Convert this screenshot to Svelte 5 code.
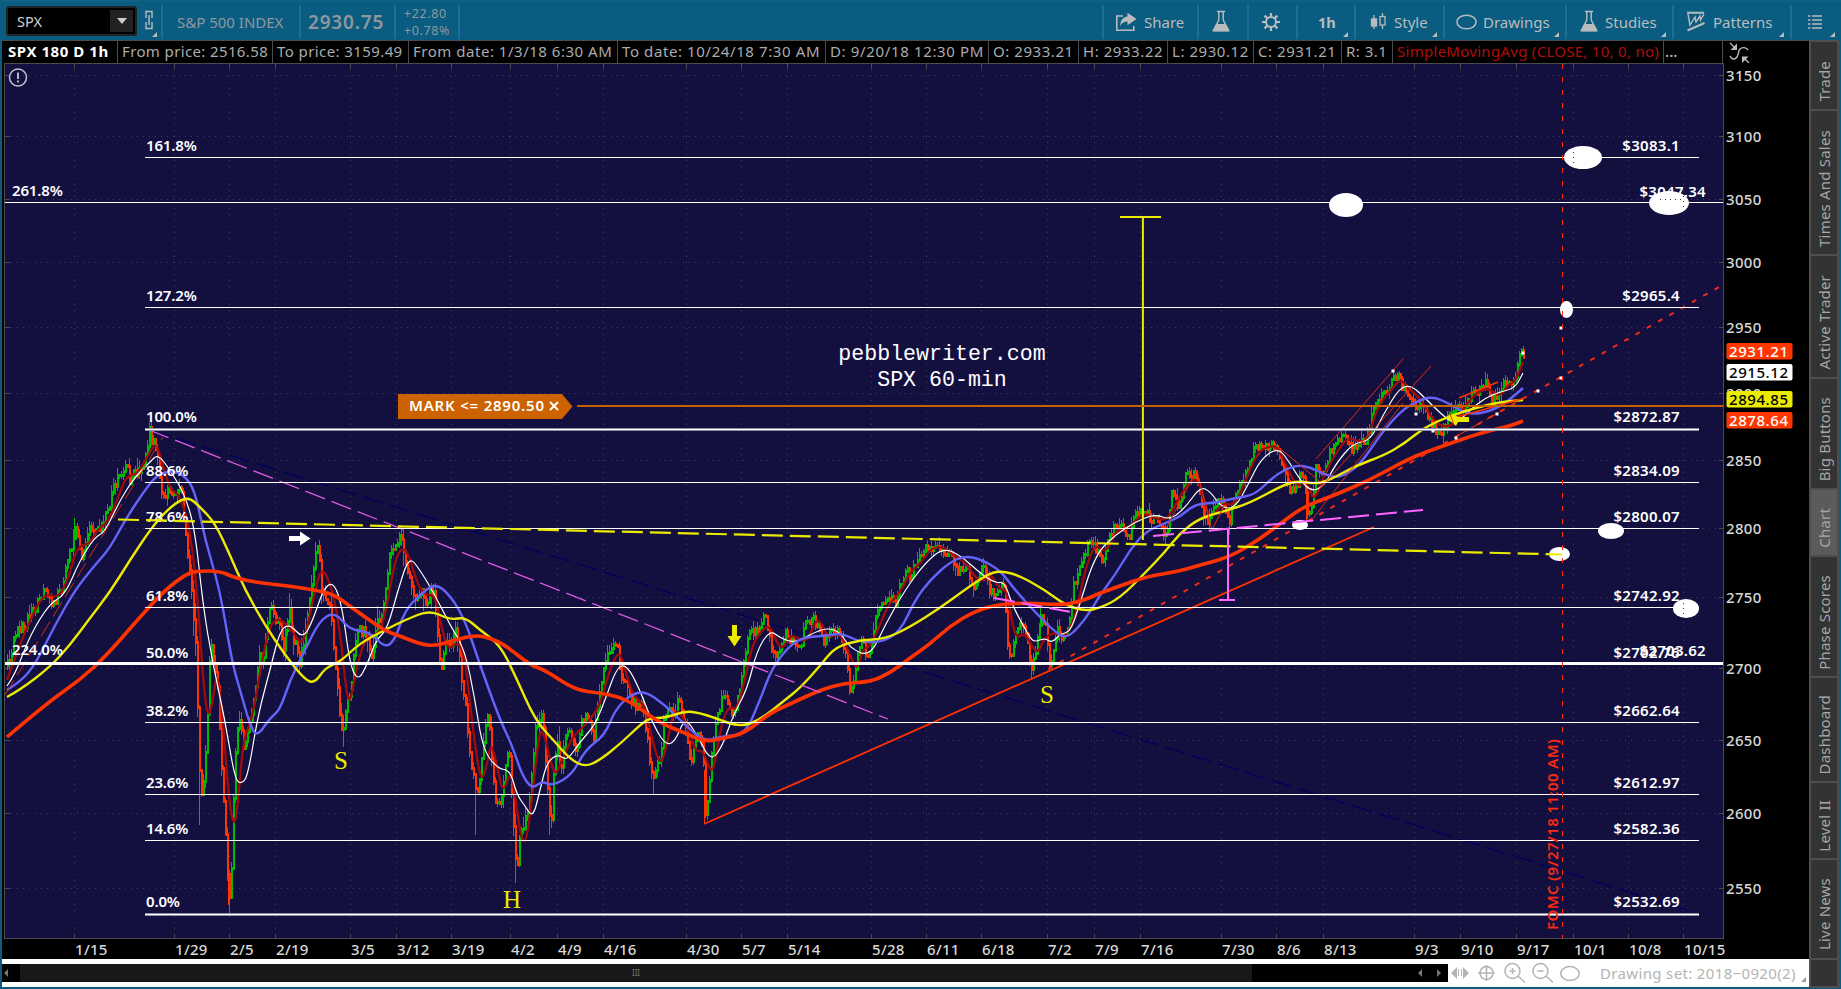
<script>
  const quotes = [
    { text: 'From price: 2516.58', w: 155, gap: 0.37 },
    { text: 'To price: 3159.49', w: 136, gap: 0.41 },
    { text: 'From date: 1/3/18 6:30 AM', w: 209, gap: 0.52 },
    { text: 'To date: 10/24/18 7:30 AM', w: 208, gap: 0.6 },
    { text: 'D: 9/20/18 12:30 PM', w: 163, gap: 0.65 },
    { text: 'O: 2933.21', w: 90, gap: 0.55 },
    { text: 'H: 2933.22', w: 89, gap: 0.55 },
    { text: 'L: 2930.12', w: 86, gap: 0.55 },
    { text: 'C: 2931.21', w: 88, gap: 0.55 },
    { text: 'R: 3.1', w: 51, gap: 0.5 }
  ];

  const tabs = [
    { name: 'Trade', h: 67 },
    { name: 'Times And Sales', h: 143 },
    { name: 'Active Trader', h: 121 },
    { name: 'Big Buttons', h: 109 },
    { name: 'Chart', h: 65 },
    { name: 'Phase Scores', h: 119 },
    { name: 'Dashboard', h: 103 },
    { name: 'Level II', h: 75 },
    { name: 'Live News', h: 98 },
    { name: '', h: 26 }
  ];
  let activeTab = $state('Chart');

  const priceTicks = [
    [3150, 75.5], [3100, 136.5], [3050, 199.5], [3000, 262.5], [2950, 327.5], [2900, 393.5], [2850, 460.5],
    [2800, 528.5], [2750, 597.5], [2700, 668.5], [2650, 740.5], [2600, 813.5], [2550, 888.5]
  ];

  const dateTicks = [
    ['1/15', 74.5], ['1/29', 174.5], ['2/5', 229.5], ['2/19', 275.5], ['3/5', 350.5], ['3/12', 396.5], ['3/19', 451.5],
    ['4/2', 510.5], ['4/9', 557.5], ['4/16', 603.5], ['4/30', 686.5], ['5/7', 741.5], ['5/14', 787.5], ['5/28', 871.5],
    ['6/11', 926.5], ['6/18', 981.5], ['7/2', 1047.5], ['7/9', 1094.5], ['7/16', 1140.5], ['7/30', 1221.5],
    ['8/6', 1276.5], ['8/13', 1323.5], ['9/3', 1414.5], ['9/10', 1460.5], ['9/17', 1516.5], ['10/1', 1573.5],
    ['10/8', 1628.5], ['10/15', 1683.5]
  ];

  const fibs = [
    { pct: '161.8%', price: '$3083.1', y: 157.5 },
    { pct: '127.2%', price: '$2965.4', y: 307.5 },
    { pct: '100.0%', price: '$2872.87', y: 429.5, bold: true },
    { pct: '88.6%', price: '$2834.09', y: 482.5 },
    { pct: '78.6%', price: '$2800.07', y: 528.5 },
    { pct: '61.8%', price: '$2742.92', y: 607.5 },
    { pct: '50.0%', price: '$2702.76', y: 664.5, hidden: true },
    { pct: '38.2%', price: '$2662.64', y: 722.5 },
    { pct: '23.6%', price: '$2612.97', y: 794.5 },
    { pct: '14.6%', price: '$2582.36', y: 840.5 },
    { pct: '0.0%', price: '$2532.69', y: 914.5, bold: true }
  ];

  const tags = [
    { v: '2931.21', y: 343, bg: '#ff3600', fg: '#fff' },
    { v: '2915.12', y: 364, bg: '#fff', fg: '#000' },
    { v: '2894.85', y: 391, bg: '#ebeb00', fg: '#000' },
    { v: '2878.64', y: 412, bg: '#ff3600', fg: '#fff' }
  ];

  const ellipses = [
    [1583, 157.5, 19, 11.5], [1669, 203, 20, 12], [1346, 205, 17, 12], [1566.5, 309.5, 6.5, 8.5],
    [1611, 531, 13, 8], [1559.5, 554, 10.5, 7], [1686, 608.5, 13, 9.5], [1300, 525, 8, 5]
  ];
  const dots = [[1393, 371], [1416, 414], [1433, 431], [1456, 438], [1497, 414], [1538, 391], [1561, 328], [1561, 378], [1523, 353]];

  // price path, screen units
  const price = '7,665 12,645 16,632 24,625 30,612 36,605 44,588 48,593 52,603 57,596 62,585 66,560 72,548 75,527 78,545 81,560 86,542 90,525 95,530 100,527 106,515 111,495 117,477 122,478 125,462 129,478 133,468 140,475 145,450 149,432 151,442 154,438 157,455 160,490 164,495 168,488 172,500 177,490 180,485 184,525 188,560 192,605 196,660 198,750 200,800 204,770 208,690 210,640 213,665 216,670 220,750 224,820 228,890 230,905 234,760 236,735 240,715 243,750 247,735 252,705 256,680 259,650 262,660 270,605 273,615 279,625 283,645 289,610 292,640 296,640 299,665 303,640 307,610 311,585 315,555 318,545 321,590 328,600 331,620 335,670 339,710 342,735 346,705 350,690 355,640 359,630 364,630 371,655 376,625 382,615 386,575 391,545 395,545 401,535 404,560 408,570 412,590 416,603 420,590 424,605 430,590 434,595 436,625 440,670 446,640 450,645 456,625 459,650 462,690 465,700 468,740 472,770 476,800 479,780 483,740 488,710 492,770 495,805 501,800 505,765 508,745 510,770 514,850 516,875 520,830 523,825 527,810 532,770 535,730 538,715 542,720 546,770 549,810 551,820 554,755 557,745 560,770 564,740 568,725 572,745 576,750 580,725 585,710 590,725 593,740 598,700 603,670 608,655 613,645 617,650 621,680 625,680 630,700 636,705 642,705 647,740 650,775 654,775 660,755 663,720 668,705 672,715 678,700 684,720 690,765 694,740 700,730 703,760 705,810 708,790 711,750 716,720 721,700 727,700 732,720 738,690 743,665 748,630 754,630 757,630 763,617 767,625 772,655 776,655 779,645 785,635 790,640 800,645 806,618 812,620 818,625 822,645 826,635 830,625 834,630 840,635 845,650 848,685 852,690 857,650 862,635 866,655 870,645 875,620 880,605 888,600 896,600 900,585 905,570 910,575 915,562 920,555 924,545 930,545 937,543 944,550 950,555 957,570 963,575 967,565 973,590 978,575 984,565 989,590 996,590 1000,583 1004,590 1007,650 1010,660 1014,640 1018,625 1022,625 1028,650 1031,670 1036,645 1040,615 1046,630 1049,660 1053,655 1056,625 1062,640 1068,620 1073,585 1078,575 1082,555 1087,545 1090,540 1094,545 1098,555 1102,562 1104,548 1110,535 1116,525 1122,528 1128,540 1134,515 1140,512 1145,510 1150,522 1156,520 1163,530 1168,525 1171,490 1177,505 1182,490 1186,470 1191,472 1196,475 1199,495 1204,515 1208,525 1214,505 1220,500 1225,510 1229,520 1232,505 1238,485 1244,475 1250,460 1255,445 1262,447 1268,447 1275,445 1279,460 1284,475 1290,490 1295,485 1300,475 1304,480 1307,510 1311,510 1315,470 1322,475 1328,455 1334,445 1340,435 1346,442 1352,450 1358,445 1364,440 1370,425 1374,400 1380,397 1388,390 1393,373 1398,380 1403,388 1410,400 1416,405 1420,402 1425,412 1432,425 1440,435 1446,420 1450,415 1455,405 1462,408 1470,395 1478,388 1485,385 1492,400 1498,395 1503,385 1510,382 1514,378 1518,362 1521,350 1523,352';

  const averages = [
    { color: '#a00b0b', width: 2.3, pts: '7,680 14,660 28,625 40,600 48,594 58,598 68,580 77,546 90,544 97,530 108,522 118,498 126,476 138,474 148,455 156,442 162,462 170,490 180,495 190,530 198,600 203,680 208,720 213,700 217,670 223,720 228,790 233,826 237,815 243,740 252,720 262,660 270,625 278,618 287,625 295,635 302,645 308,625 315,590 322,566 332,588 340,630 346,690 350,705 358,660 367,635 380,635 388,600 395,560 402,547 409,555 417,583 425,595 435,595 441,625 448,651 457,641 465,655 473,730 478,765 482,781 487,765 491,742 497,765 503,795 511,768 517,810 522,842 527,840 534,780 539,735 543,730 549,755 555,777 562,760 572,738 580,730 590,720 600,705 608,675 617,653 622,657 632,695 645,705 650,730 660,768 667,745 673,712 681,712 690,735 696,752 703,750 712,776 717,750 723,718 730,706 737,710 745,680 752,645 762,630 770,625 781,652 790,635 798,638 807,642 815,622 820,620 828,638 840,633 848,650 857,672 863,648 870,647 880,625 888,605 900,593 910,572 922,562 930,549 942,546 952,554 965,562 975,577 983,582 990,572 1000,590 1007,590 1015,640 1025,632 1037,656 1044,638 1055,632 1062,638 1070,630 1078,605 1085,570 1095,543 1106,554 1117,528 1128,530 1143,512 1155,519 1168,520 1180,495 1196,474 1204,500 1210,520 1223,502 1232,506 1240,495 1257,452 1270,446 1278,447 1288,470 1297,487 1308,482 1314,503 1325,472 1340,447 1348,438 1358,441 1367,442 1378,405 1390,392 1400,378 1410,390 1420,398 1430,415 1440,427 1455,425 1465,405 1480,390 1490,389 1500,397 1508,385 1515,382 1523,362' },
    { color: '#ffffff', width: 1.2, pts: '7,686 15,675 30,635 50,603 65,595 80,560 95,537 105,532 120,500 135,477 150,462 158,454 170,470 185,495 195,530 203,605 212,660 225,720 235,780 242,784 248,775 258,715 270,670 280,630 290,624 303,639 313,620 323,590 333,581 342,605 350,665 358,681 367,665 376,640 387,630 398,590 409,556 420,570 435,595 450,625 465,650 475,700 483,750 498,769 510,770 517,795 525,806 533,818 540,790 547,762 558,754 567,761 580,742 595,725 605,700 617,667 627,665 640,690 652,722 665,745 675,742 685,717 697,735 711,762 723,745 733,715 747,690 757,650 770,630 780,638 795,643 815,632 828,628 840,632 850,648 870,657 885,625 905,590 925,563 943,548 960,555 980,573 995,583 1005,582 1012,605 1030,638 1035,642 1045,638 1052,643 1060,634 1070,632 1078,610 1095,555 1115,535 1135,522 1155,514 1170,520 1185,508 1200,487 1210,491 1222,508 1235,508 1248,485 1260,460 1278,447 1290,463 1300,480 1312,492 1325,485 1335,465 1353,443 1370,441 1383,415 1400,387 1412,386 1425,398 1440,413 1455,425 1470,410 1485,398 1500,392 1515,388 1523,373' },
    { color: '#6464fa', width: 2.4, pts: '7,690 20,682 35,665 55,625 75,590 95,565 110,548 125,520 145,490 157,475 170,471 183,474 195,490 205,540 220,590 232,662 240,690 250,725 257,737 270,718 280,710 290,680 305,650 320,620 335,612 350,630 370,632 385,648 395,640 405,610 420,595 435,583 450,595 465,620 480,665 500,720 512,745 522,775 532,789 542,781 552,786 572,775 585,750 605,735 615,710 630,695 645,691 665,705 685,725 705,742 722,736 745,735 760,700 772,668 790,645 805,637 825,636 842,633 857,641 880,643 900,632 915,600 930,580 950,562 965,556 980,559 1000,570 1015,590 1035,612 1055,632 1067,639 1085,620 1100,595 1115,575 1130,550 1145,532 1165,523 1180,517 1195,504 1215,503 1235,498 1255,495 1275,475 1295,465 1310,467 1325,475 1340,478 1360,465 1380,435 1400,412 1415,402 1432,396 1450,404 1465,413 1480,414 1500,407 1515,395 1523,388' },
    { color: '#ebeb00', width: 2.4, pts: '7,697 20,690 50,667 70,645 90,618 110,592 130,560 150,530 165,512 180,500 190,498 200,507 215,523 230,555 245,590 265,625 285,655 305,680 315,683 325,668 340,662 360,643 385,630 405,620 430,610 450,620 465,617 480,630 500,645 515,675 535,720 555,742 570,759 585,767 600,760 620,744 640,725 650,718 665,718 685,711 700,713 715,718 740,727 760,720 785,700 800,688 820,666 835,647 860,640 885,639 910,627 940,608 970,586 990,573 1003,571 1020,576 1045,590 1065,605 1085,611 1100,608 1120,598 1145,573 1165,552 1180,533 1200,518 1225,511 1250,503 1285,484 1300,481 1315,484 1330,480 1355,466 1385,455 1405,443 1425,427 1450,416 1475,408 1500,402 1523,400' },
    { color: '#ff3200', width: 3.6, pts: '7,737 47,703 80,680 107,655 140,617 165,590 185,575 195,571 220,571 235,578 260,583 290,586 320,591 335,595 355,610 385,631 400,636 420,644 435,646 455,640 475,635 490,638 505,645 530,665 545,670 575,690 600,693 620,697 635,705 660,723 685,733 705,742 725,738 745,733 770,713 790,704 820,690 845,683 870,682 890,673 910,658 930,644 950,626 975,611 1000,604 1030,603 1060,605 1080,602 1100,593 1120,586 1145,577 1180,571 1200,565 1230,557 1260,539 1285,520 1305,506 1330,497 1370,480 1410,458 1440,447 1480,433 1510,426 1523,421' }
  ];

  // midpoint smoothing so the averages bend instead of kinking
  function smooth(str) {
    const p = str.split(' ').map((s) => s.split(',').map(Number));
    let d = `M${p[0]}`;
    for (let i = 1; i < p.length - 1; i++) {
      d += `Q${p[i]} ${(p[i][0] + p[i + 1][0]) / 2},${(p[i][1] + p[i + 1][1]) / 2}`;
    }
    return d + `L${p[p.length - 1]}`;
  }

  function buildBars(str) {
    const p = str.split(' ').map((s) => s.split(',').map(Number));
    let seed = 41;
    const rnd = () => (seed = (seed * 16807) % 2147483647) / 2147483647;
    const out = { up: '', down: '', upBody: '', downBody: '' };
    let i = 0;
    let open = p[0][1];
    for (let x = 7; x <= 1523; x += 2) {
      while (i < p.length - 2 && p[i + 1][0] < x) i++;
      const [x0, y0] = p[i];
      const [x1, y1] = p[i + 1];
      const t = (x - x0) / (x1 - x0);
      const close = y0 + (y1 - y0) * t + (rnd() - 0.5) * 10;
      const key = close < open ? 'up' : 'down';
      const wick = 3 + rnd() * (x > 190 && x < 560 ? 16 : 8);
      const hi = Math.min(open, close) - wick * rnd();
      const lo = Math.max(open, close) + rnd() * wick;
      out[key] += `M${x}.5 ${hi.toFixed(1)}V${lo.toFixed(1)}`;
      out[key + 'Body'] += `M${x + 1} ${(Math.min(open, close) - 1).toFixed(1)}V${(Math.max(open, close) + 2).toFixed(1)}`;
      open = close;
    }
    // session extremes
    out.up += 'M149.5 430V455M199.5 760V825M229.5 870V914M74.5 518V545M1040.5 605V625M1229.5 510V535';
    out.down += 'M343.5 715V747M475.5 790V835M515.5 850V883M549.5 800V835M704.5 770V824M653.5 770V795M1031.5 655V679M1306.5 490V520M228.5 860V905';
    return out;
  }

  const bars = buildBars(price);
</script>

{#snippet flask()}
  <svg width="20" height="24" viewBox="0 0 20 24">
    <path d="M6 1.5h8M7.8 2v8L2.2 20.5h15.6L12.2 10V2" fill="none" stroke="#b9bcbe" stroke-width="1.4" />
    <path d="M6 14h8l4 7.5H2z" fill="#b9bcbe" />
  </svg>
{/snippet}

<div class="platform">
  <header class="toolbar">
    <div class="symbol">
      <span>SPX</span>
      <button class="drop" aria-label="Symbol list"><i></i></button>
    </div>
    <div class="cell link corner">
      <svg width="10" height="20" viewBox="0 0 10 20" fill="none" stroke="#b9bcbe" stroke-width="1.4">
        <path d="M2 8V1.5h6V8M2 12v6.5h6V12M5 5v10" />
      </svg>
    </div>
    <div class="cell name"><span>S&amp;P 500 INDEX</span></div>
    <div class="cell last"><span>2930.75</span></div>
    <div class="cell change"><span>+22.80</span><span>+0.78%</span></div>
    <div class="spacer"></div>
    <div class="cell share">
      <svg width="22" height="20" viewBox="0 0 22 20">
        <path d="M8 4H1.8v14.2h17V14" fill="none" stroke="#b9bcbe" stroke-width="1.6" />
        <path d="M12.5 0.8L21.5 7l-9 6.2V9.5C9 9.5 6.5 11 5 14.2 5.3 8.6 8 5 12.5 4.5z" fill="#b9bcbe" />
      </svg>
      <span>Share</span>
    </div>
    <div class="cell lab">{@render flask()}</div>
    <div class="cell gear">
      <svg width="20" height="20" viewBox="0 0 20 20" fill="none" stroke="#b9bcbe">
        <circle cx="10" cy="10" r="5" stroke-width="2" />
        <path d="M10 1v4M10 15v4M1 10h4M15 10h4M3.6 3.6l3 3M13.4 13.4l3 3M3.6 16.4l3-3M13.4 6.6l3-3" stroke-width="2.2" />
      </svg>
    </div>
    <div class="cell hour corner"><b>1h</b></div>
    <div class="cell style corner">
      <svg width="17" height="20" viewBox="0 0 17 20" stroke="#b9bcbe" stroke-width="1.3">
        <path d="M4 3v14M12.5 1v4M12.5 13v4" />
        <rect x="1.5" y="7" width="5" height="7" fill="#b9bcbe" />
        <rect x="10" y="4.5" width="5" height="8.5" fill="none" />
      </svg>
      <span>Style</span>
    </div>
    <div class="cell drawings corner">
      <svg width="21" height="16" viewBox="0 0 21 16"><ellipse cx="10.5" cy="8" rx="9.6" ry="6.8" fill="none" stroke="#b9bcbe" stroke-width="1.5" /></svg>
      <span>Drawings</span>
    </div>
    <div class="cell studies corner">{@render flask()}<span>Studies</span></div>
    <div class="cell patterns corner">
      <svg width="20" height="22" viewBox="0 0 20 22" fill="none" stroke="#b9bcbe">
        <path d="M1 1.8h17M1.5 19.5L18.5 12" stroke-width="2" />
        <path d="M2 3l2 11 5-8 1 5 4-6 .5 4L18 3" stroke-width="1.4" />
      </svg>
      <span>Patterns</span>
    </div>
    <div class="cell list corner">
      <svg width="14" height="14" viewBox="0 0 14 14" stroke="#b9bcbe" stroke-width="1.6">
        <path d="M0 1h2.4M4 1h10M0 5h2.4M4 5h10M0 9h2.4M4 9h10M0 13h2.4M4 13h10" />
      </svg>
    </div>
  </header>

  <div class="body">
    <main>
      <div class="quotes">
        <b class="title">SPX 180 D 1h</b>
        {#each quotes as q}
          <span style="width: {q.w}px; letter-spacing: {q.gap}px">{q.text}</span>
        {/each}
        <span class="sma">SimpleMovingAvg (CLOSE, 10, 0, no)</span>
        <em>...</em>
        <svg class="fitscale" width="22" height="22" viewBox="0 0 22 22" fill="none" stroke="#b9bcbe" stroke-width="1.4">
          <path d="M1 14c1.5 3.500 5 4 7 1s1-6 3-8 6-2 8 1M1 1l5 5M20 21l-5-5" />
          <path d="M8 1.500V8H1.500zM13 21v-6.500h6.500z" fill="#b9bcbe" stroke="none" />
        </svg>
      </div>

      <svg class="chart" width="1807" height="896" viewBox="2 63 1807 896">
        <rect x="2" y="63" width="1807" height="896" fill="#000" />
        <rect x="4.5" y="63.5" width="1719" height="875" fill="#131040" stroke="#4a4a50" />

        <g class="grid">
          {#each priceTicks as [v, y]}
            <path d="M5 {y}H1723" />
          {/each}
          {#each dateTicks as [label, x]}
            <path d="M{x} 64V938" />
          {/each}
        </g>
        <g stroke="#4b4b4b">
          {#each priceTicks as [v, y]}
            <path d="M5 {y}h5M1719 {y}h5" />
          {/each}
          {#each dateTicks as [label, x]}
            <path d="M{x} 64v5M{x} 934v4" />
          {/each}
        </g>

        <path d="M149 430L1690 911" stroke="#00005c" stroke-width="1.3" stroke-dasharray="21 7" />

        <g fill="none" shape-rendering="crispEdges">
          <path d={bars.up} stroke="#00b900" />
          <path d={bars.down} stroke="#ff3200" />
          <path d={bars.upBody} stroke="#00b900" stroke-width="2" />
          <path d={bars.downBody} stroke="#ff3200" stroke-width="2" />
        </g>

        {#each averages as a}
          <path d={smooth(a.pts)} fill="none" stroke={a.color} stroke-width={a.width} stroke-linejoin="round" />
        {/each}

        <!-- trend lines and channels -->
        <g fill="none">
          <path d="M5 695L163 437" stroke="#d42a0c" stroke-dasharray="17 6" />
          <path d="M149 430L888 719" stroke="#dc5adc" stroke-width="1.3" stroke-dasharray="21 7" />
          <path d="M704 824L1374 527" stroke="#ff3200" stroke-width="1.8" />
          <path d="M1316 459L1403 359M1311 521L1403 403M1313 496L1431 366M1278 447L1323 484M1163 534L1197 470L1212 530L1224 506" stroke="#dc2c10" />
          <path d="M1459 398L1498 382M1457 417L1525 398" stroke="#ff3200" stroke-width="1.8" />
          <path d="M1455 437L1505 409" stroke="#ff3200" stroke-dasharray="14 4" />
          <path d="M1048 669L1719 287" stroke="#f02a14" stroke-width="2" stroke-dasharray="5 8" />
        </g>

        {#each fibs as f}
          {#if !f.hidden}
            {#if f.bold}<path d="M145 {f.y}H1699" stroke="#8f8ea6" stroke-width="3" />{/if}
            <path d="M145 {f.y}H1699" stroke="#fff" />
          {/if}
          <text class="label pct" x="146" y={f.y - (f.bold ? 7.5 : 6.5)}>{f.pct}</text>
          <text class="label" x="1680" y={f.y - (f.bold ? 7.5 : 6.5)} text-anchor="end">{f.price}</text>
        {/each}
        <path d="M5 202.5H1723" stroke="#fff" />
        <path d="M5 663.5H1723" stroke="#fff" stroke-width="3" />
        <text class="label pct" x="12" y="196">261.8%</text>
        <text class="label" x="1706" y="196.5" text-anchor="end">$3047.34</text>
        <text class="label pct" x="12" y="655">224.0%</text>
        <text class="label" x="1706" y="655.5" text-anchor="end">$2703.62</text>

        {#each ellipses as [cx, cy, rx, ry]}
          <ellipse {cx} {cy} {rx} {ry} fill="#fff" />
        {/each}
        {#each dots as [x, y]}
          <rect x={x - 1.5} y={y - 1.5} width="3" height="3" fill="#fff" />
        {/each}
        <path d="M1573.5 152v12M1660 199.5h22M1683.5 196v14M1683.5 603v12" stroke="#333" stroke-dasharray="1 4" />

        <path d="M118 519.5L1562 554.5" stroke="#ebeb00" stroke-width="2.2" stroke-dasharray="21 7" />
        <path d="M1142.9 217V540M1120 217H1161" stroke="#ebeb00" stroke-width="2" />
        <path d="M994 598L1071 612M1153 536L1423 510" stroke="#ff64ff" stroke-width="2" stroke-dasharray="21 7" />
        <path d="M1228 528V600M1219 600H1235" stroke="#ff64ff" stroke-width="2" />

        <path d="M289 536h11v-4.500l10.500 7-10.500 7V541h-11z" fill="#fff" />
        <path d="M732 625h5v11h4.500l-7 10.500-7-10.500h4.500z" fill="#ebeb00" />
        <path d="M1447 418l6-4 5 3h11v5h-11l-2 4z" fill="#ebeb00" />
        <path d="M1449 411L1454 425" stroke="#ff3200" />

        <path d="M1562.5 64V938" stroke="#ff2a10" stroke-dasharray="5 8" />
        <text class="event" transform="translate(1558 930) rotate(-90)" textLength="191">FOMC (9/27/18 11:00 AM)</text>

        <path d="M577 406H1723" stroke="#c86000" stroke-width="2" />
        <path d="M398 394H562L572.5 406.5 562 419H398z" fill="#cc6200" />
        <text class="alert" x="409" y="411" textLength="135">MARK &lt;= 2890.50</text>
        <path d="M550 402l8 8M558 402l-8 8" stroke="#fff" stroke-width="2" />

        <text class="note" x="942" y="360">pebblewriter.com</text>
        <text class="note" x="942" y="386">SPX 60-min</text>
        <text class="wave" x="341" y="769">S</text>
        <text class="wave" x="512" y="907.5">H</text>
        <text class="wave" x="1047" y="702.5">S</text>

        <circle cx="18" cy="77.5" r="8.5" fill="none" stroke="#c4c4cc" stroke-width="1.5" />
        <path d="M18 72.500v6.500M18 80.500v2" stroke="#c4c4cc" stroke-width="1.8" />

        {#each priceTicks as [v, y]}
          <text class="axis" x="1726" y={y + 5.5}>{v}</text>
        {/each}
        {#each dateTicks as [label, x]}
          <text class="axis" x={x + 0.5} y="954.5">{label}</text>
        {/each}
        {#each tags as t}
          <rect x="1726.5" y={t.y} width="66" height="16.5" rx="2" fill={t.bg} />
          <text class="tag" x="1729" y={t.y + 13.5} fill={t.fg} textLength="59">{t.v}</text>
        {/each}
      </svg>

      <footer>
        <div class="scroll">
          <i class="tri left"></i>
          <div class="thumb">III</div>
          <div class="ends"><i class="tri left"></i><i class="tri right"></i></div>
        </div>
        <svg class="tools" width="134" height="28" viewBox="1449 959 134 28" fill="none" stroke="#b4b4b4" stroke-width="1.5">
          <path d="M1458 967l-6 6 6 6zM1464 967l6 6-6 6z" fill="#b4b4b4" stroke="none" />
          <path d="M1459.5 969v7M1462.5 969v7" stroke-width="1" />
          <circle cx="1487.5" cy="973" r="6.5" />
          <path d="M1479 973h17M1487.500 965v16" />
          <circle cx="1513.5" cy="971" r="7.5" />
          <path d="M1510.5 971h6M1513.5 968v6M1519 976l7 6.5" />
          <circle cx="1541.5" cy="971" r="7.5" />
          <path d="M1538.5 971h6M1547 976l7 6.5" />
          <ellipse cx="1571" cy="973.5" rx="9.2" ry="7" />
        </svg>
        <div class="set corner">Drawing set: 2018−0920(2)</div>
      </footer>
    </main>

    <aside>
      {#each tabs as tab}
        <button class:active={tab.name !== '' && activeTab === tab.name} style="height: {tab.h}px" onclick={() => (activeTab = tab.name)}>
          <span>{tab.name}</span>
        </button>
      {/each}
    </aside>
  </div>
</div>

<style>
  :global(body) {
    background: #0a5c80;
    overflow: hidden;
  }
  .platform {
    width: 1841px;
    height: 989px;
    box-sizing: border-box;
    display: flex;
    flex-direction: column;
    background: #0a5c80;
    font-family: 'Noto Sans', 'Open Sans', sans-serif;
    font-size: 15px;
    color: #a9acae;
  }
  button {
    font: inherit;
    color: inherit;
    border: 0;
    padding: 0;
  }

  /* Toolbar */
  .toolbar {
    display: flex;
    align-items: center;
    height: 40px;
    flex: none;
    padding-left: 6px;
    box-sizing: border-box;
    border-top: 2px solid #0c6184;
  }
  .symbol {
    display: flex;
    align-items: center;
    justify-content: space-between;
    width: 131px;
    height: 30px;
    box-sizing: border-box;
    border: 2px solid #1f2426;
    border-radius: 3px;
    background: #000;
    color: #d0d0d0;
    padding: 0 2px 0 9px;
    font-size: 14.5px;
  }
  .drop {
    width: 23px;
    height: 22px;
    background: #222;
    display: grid;
    place-items: center;
  }
  .drop i {
    border: 5.5px solid transparent;
    border-top: 6px solid #ccc;
    border-bottom: 0;
  }
  .cell {
    display: flex;
    align-items: center;
    height: 34px;
    margin-top: 1px;
    box-sizing: border-box;
    border-left: 2px solid #1d6f93;
    color: #b9bcbe;
    white-space: nowrap;
    position: relative;
  }
  .corner::after {
    content: '';
    position: absolute;
    right: 6px;
    bottom: 2px;
    border-left: 5px solid transparent;
    border-bottom: 5px solid #b9bcbe;
  }
  .link {
    width: 24px;
    border: 0;
    padding: 0 0 4px 7px;
  }
  .link.corner::after {
    right: 4px;
  }
  .name {
    width: 138px;
    padding-left: 14px;
    color: #8f989e;
  }
  .last {
    width: 95px;
    padding-left: 7px;
    font-size: 19px;
    font-weight: 600;
    letter-spacing: 0.8px;
    color: #8f989e;
  }
  .change {
    width: 66px;
    padding-left: 8px;
    flex-direction: column;
    align-items: flex-start;
    justify-content: center;
    font-size: 12.5px;
    line-height: 17px;
    letter-spacing: 0.6px;
    color: #8f989e;
    border-right: 2px solid #1d6f93;
  }
  .spacer {
    flex: 1;
  }
  .share {
    width: 95px;
    padding-left: 11px;
    gap: 7px;
  }
  .lab {
    width: 50px;
    padding-left: 12px;
  }
  .gear {
    width: 49px;
    padding-left: 12px;
  }
  .hour {
    width: 58px;
    padding-left: 20px;
    font-size: 14.5px;
  }
  .style {
    width: 89px;
    padding-left: 14px;
    gap: 7px;
  }
  .drawings {
    width: 122px;
    padding-left: 11px;
    gap: 6px;
  }
  .studies {
    width: 107px;
    padding-left: 12px;
    gap: 6px;
  }
  .patterns {
    width: 118px;
    padding-left: 12px;
    gap: 7px;
  }
  .list {
    width: 51px;
    padding-left: 16px;
  }

  .body {
    display: flex;
    flex: 1;
    padding: 0 0 2px 2px;
  }
  main {
    width: 1807px;
    display: flex;
    flex-direction: column;
  }

  /* Quote strip */
  .quotes {
    display: flex;
    height: 23px;
    line-height: 21px;
    background: #000;
    box-sizing: border-box;
    border-top: 1px solid #4a4a50;
    padding-left: 3px;
  }
  .quotes > span,
  .quotes > b,
  .quotes > em {
    box-sizing: border-box;
    padding-left: 4px;
    border-right: 1px solid #4a4a50;
    white-space: nowrap;
  }
  .quotes .title {
    width: 113px;
    padding-left: 3px;
    color: #fff;
    font-weight: 700;
    letter-spacing: 0.55px;
  }
  .quotes .sma {
    width: 271px;
    color: #b00c0c;
    letter-spacing: 0.28px;
  }
  .quotes em {
    width: 59px;
    padding-left: 1px;
    font-style: normal;
    font-weight: 600;
  }
  .fitscale {
    margin: 1px 0 0 6px;
  }

  /* Chart */
  .chart {
    display: block;
    flex: none;
  }
  .grid path {
    stroke: #3f3f45;
    stroke-dasharray: 1 5;
  }
  .label {
    fill: #fff;
    font-weight: 600;
    font-size: 15px;
    letter-spacing: 0.3px;
  }
  .label.pct {
    letter-spacing: -0.15px;
  }
  .axis {
    fill: #d8d8d8;
    font-weight: 500;
    font-size: 15px;
    letter-spacing: 0.3px;
  }
  .tag {
    font-size: 15px;
    font-weight: 500;
  }
  .event {
    fill: #ff2a10;
    font-size: 15px;
    font-weight: 600;
  }
  .alert {
    fill: #fff;
    font-size: 15px;
    font-weight: 600;
  }
  .note {
    fill: #fff;
    font-family: 'Liberation Mono', monospace;
    font-size: 21.6px;
    text-anchor: middle;
  }
  .wave {
    fill: #ebeb00;
    font-family: 'Liberation Serif', serif;
    font-size: 25px;
    text-anchor: middle;
  }

  /* Bottom bar */
  footer {
    display: flex;
    align-items: center;
    height: 28px;
    background: #fff;
  }
  .scroll {
    display: flex;
    align-items: center;
    width: 1446px;
    height: 18px;
    background: #000;
  }
  .thumb {
    flex: none;
    width: 1232px;
    height: 18px;
    line-height: 18px;
    margin-left: 12px;
    background: #181818;
    color: #777;
    font-size: 8px;
    text-align: center;
  }
  .ends {
    flex: 1;
    display: flex;
    justify-content: flex-end;
    gap: 15px;
    padding-right: 7px;
  }
  .tri {
    border: 4px solid transparent;
  }
  .tri.left {
    border-right-color: #777;
    border-left-width: 2px;
  }
  .tri.right {
    border-left-color: #777;
    border-right-width: 0;
  }
  .set {
    flex: 1;
    height: 28px;
    line-height: 28px;
    padding-left: 18px;
    position: relative;
    color: #b4b4b4;
    letter-spacing: 0.35px;
  }
  .set.corner::after {
    right: 3px;
    bottom: 5px;
    border-bottom-color: #999;
  }

  /* Gadget tabs */
  aside {
    display: flex;
    flex-direction: column;
    gap: 2px;
    width: 30px;
    box-sizing: border-box;
    padding: 2px;
    background: #4e4e4e;
  }
  aside button {
    flex: none;
    width: 26px;
    box-sizing: border-box;
    padding-top: 11px;
    background: #333;
    display: flex;
    align-items: center;
    justify-content: center;
    color: #a6a6a6;
  }
  aside button.active {
    background: #5b5b5b;
  }
  aside span {
    writing-mode: vertical-rl;
    transform: rotate(180deg);
    white-space: nowrap;
    letter-spacing: 0.2px;
  }
</style>
